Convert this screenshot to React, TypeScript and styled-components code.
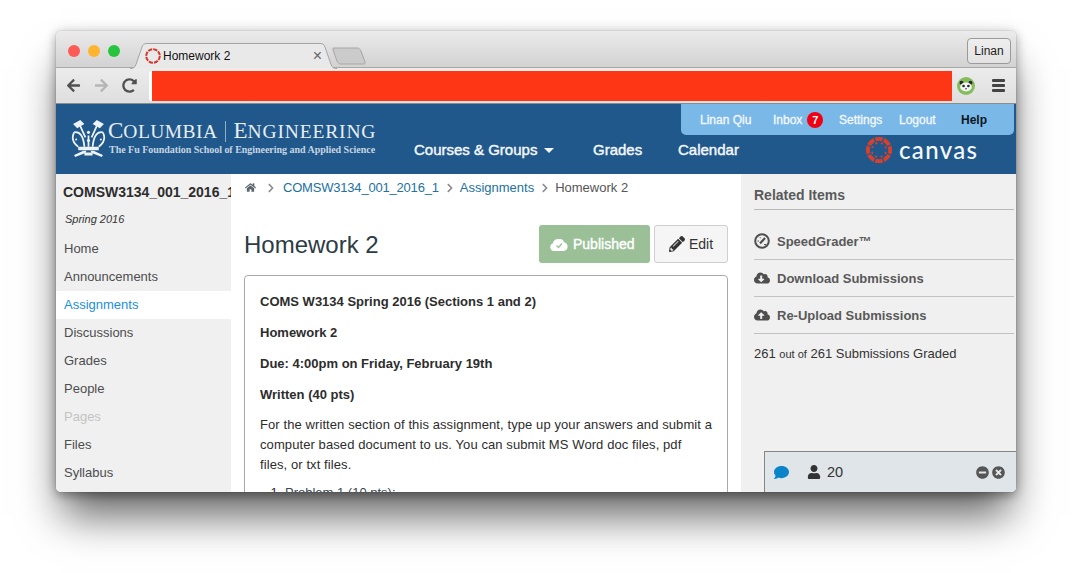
import React from "react";
import styled, { createGlobalStyle } from "styled-components";
import { FaHome, FaPencilAlt, FaComment, FaUser, FaMinusCircle, FaTimesCircle, FaCloudDownloadAlt, FaCloudUploadAlt, FaArrowLeft, FaArrowRight, FaRedoAlt, FaChevronRight } from "react-icons/fa";

const Global = createGlobalStyle`
  html, body { margin: 0; padding: 0; background: #fff; }
  body { font-family: "Liberation Sans", Arial, sans-serif; width: 1072px; height: 573px; overflow: hidden; }
  * { box-sizing: border-box; }
`;
const Stage = styled.div`
  padding: 31px 0 0 56px;
`;
const Window = styled.div`
  position: relative;
  width: 960px;
  height: 461px;
  border-radius: 5px;
  overflow: hidden;
  background: #fff;
`;
const Shadow = styled.div`
  width: 960px;
  height: 461px;
  border-radius: 5px;
  box-shadow: 0 30px 40px -6px rgba(0, 0, 0, 0.6), 0 4px 10px rgba(0, 0, 0, 0.25), 0 0 14px rgba(0, 0, 0, 0.15), 0 0 1px rgba(0, 0, 0, 0.5);
`;
const TitleBar = styled.div`
  height: 37px;
  display: flex;
  align-items: flex-start;
  padding: 0 5px 0 12px;
  background: linear-gradient(#ebebeb, #d2d2d2);
  border-bottom: 1px solid #a8a8a8;
`;
const Lights = styled.div`
  display: flex;
  gap: 8px;
  padding-top: 14px;
`;
const Light = styled.span<{ $c: string }>`
  width: 12px;
  height: 12px;
  border-radius: 50%;
  background: ${(p) => p.$c};
`;
const Tab = styled.div`
  position: relative;
  width: 207px;
  height: 25px;
  margin: 12px 0 0 10px;
  display: flex;
  align-items: center;
  padding: 0 15px 0 15px;
  font-size: 12px;
  color: #111;
  z-index: 1;
`;
const TabShape = styled.svg`
  position: absolute;
  left: 0;
  top: 0;
  width: 207px;
  height: 26px;
`;
const Favicon = styled.svg`
  position: relative;
  width: 16px;
  height: 16px;
  margin-right: 2px;
`;
const TabLabel = styled.span`
  position: relative;
  flex: 1;
`;
const TabClose = styled.span`
  position: relative;
  font-size: 16px;
  color: #666;
  line-height: 1;
`;
const NewTab = styled.svg`
  width: 34px;
  height: 18px;
  margin: 16px 0 0 -5px;
`;
const Spacer = styled.div`
  flex: 1;
`;
const ProfileButton = styled.div`
  width: 44px;
  height: 26px;
  margin-top: 7px;
  border: 1px solid #9a9a9a;
  border-radius: 4px;
  background: linear-gradient(#eee, #e2e2e2);
  font-size: 12px;
  color: #222;
  display: flex;
  align-items: center;
  justify-content: center;
`;
const Toolbar = styled.div`
  height: 36px;
  display: flex;
  align-items: center;
  padding: 0 11px 0 10px;
  background: linear-gradient(#ececec, #dedede);
  border-bottom: 1px solid #8c8c8c;
`;
const NavIcon = styled.span<{ $c: string }>`
  display: flex;
  align-items: center;
  justify-content: center;
  width: 15px;
  margin-right: 13px;
  color: ${(p) => p.$c};
  font-size: 15px;
`;
const Omnibox = styled.div`
  width: 804px;
  height: 30px;
  margin-left: -1px;
  padding-left: 3px;
  background: #fff;
  border-radius: 3px 0 0 3px;
`;
const Redacted = styled.div`
  height: 30px;
  background: #ff3616;
`;
const Panda = styled.svg`
  width: 18px;
  height: 18px;
  margin: 0 1px 0 5px;
`;
const Menu = styled.div`
  width: 13px;
  margin-left: 16px;
  display: flex;
  flex-direction: column;
  gap: 2px;
`;
const MenuBar = styled.span`
  height: 3px;
  border-radius: 1px;
  background: #444;
`;
const Header = styled.header`
  position: relative;
  height: 70px;
  background: #20588b;
  display: flex;
  align-items: flex-start;
  padding-left: 15px;
`;
const Brand = styled.div`
  display: flex;
  gap: 2px;
  padding-top: 16px;
  width: 343px;
  flex: none;
`;
const BrandText = styled.div`
  font-family: "Liberation Serif", serif;
  color: #e8eef4;
  white-space: nowrap;
  margin-top: -1px;
`;
const BrandTop = styled.div`
  display: flex;
  align-items: baseline;
  line-height: 24px;
  height: 24px;
`;
const BrandWord = styled.span<{ $ls: number }>`
  font-size: 19.5px;
  letter-spacing: ${(p) => p.$ls}px;
`;
const BrandCap = styled.span`
  font-size: 23px;
`;
const BrandDivider = styled.span`
  width: 1px;
  height: 21px;
  margin: 0 8px 0 7px;
  align-self: center;
  background: #8fb0cc;
`;
const BrandSub = styled.div`
  font-size: 10px;
  font-weight: bold;
  line-height: 11px;
  color: #c7d5e2;
  margin: 1px 0 0 1px;
  letter-spacing: -0.03px;
`;
const MainNav = styled.nav`
  display: flex;
  padding-top: 37px;
  font-size: 15px;
  -webkit-text-stroke: 0.45px #f4f7fa;
  color: #f4f7fa;
  line-height: 18px;
  white-space: nowrap;
`;
const NavItem = styled.span<{ $w: number }>`
  width: ${(p) => p.$w}px;
  display: flex;
  align-items: center;
`;
const Caret = styled.span`
  width: 0;
  height: 0;
  margin-left: 7px;
  border-left: 5px solid transparent;
  border-right: 5px solid transparent;
  border-top: 5px solid #f4f7fa;
`;
const CanvasLogo = styled.div`
  margin-left: 14px;
  padding-top: 32px;
  display: flex;
  align-items: center;
  gap: 7px;
  font-family: "Lato", sans-serif;
  font-size: 24px;
  font-weight: 500;
  line-height: 28px;
  letter-spacing: 1.35px;
  color: #f5f8fb;
`;
const AccountNav = styled.div`
  position: absolute;
  left: 625px;
  top: 0;
  width: 333px;
  height: 31px;
  padding-left: 19px;
  background: #7ab8e8;
  border-radius: 0 0 5px 5px;
  display: flex;
  align-items: center;
  font-size: 12px;
  color: #f1f7fc;
`;
const AccountItem = styled.span<{ $w: number; $dark?: boolean }>`
  width: ${(p) => p.$w}px;
  display: flex;
  align-items: center;
  color: ${(p) => (p.$dark ? "#0c1520" : "inherit")};
  font-weight: ${(p) => (p.$dark ? "bold" : "normal")};
  -webkit-text-stroke: ${(p) => (p.$dark ? "0" : "0.35px #f1f7fc")};
`;
const Badge = styled.span`
  width: 16px;
  height: 16px;
  margin-left: 5px;
  border-radius: 50%;
  background: #f00012;
  color: #fff;
  font-size: 11px;
  font-weight: bold;
  -webkit-text-stroke: 0;
  display: flex;
  align-items: center;
  justify-content: center;
`;
const Columns = styled.div`
  display: flex;
  height: 318px;
  overflow: hidden;
`;
const Sidebar = styled.aside`
  width: 175px;
  flex: none;
  background: #f0f0f0;
  overflow: hidden;
`;
const CourseTitle = styled.div`
  padding: 10px 0 0 7px;
  font-size: 14px;
  font-weight: bold;
  line-height: 17px;
  color: #2d2d2d;
  white-space: nowrap;
`;
const Term = styled.div`
  padding: 12px 0 0 9px;
  font-size: 11px;
  font-style: italic;
  line-height: 13px;
  color: #333;
`;
const SideNav = styled.nav`
  padding-top: 9px;
`;
const SideItem = styled.div<{ $active?: boolean; $off?: boolean }>`
  height: 28px;
  padding: 0 0 2px 8px;
  display: flex;
  align-items: center;
  font-size: 13px;
  color: ${(p) => (p.$active ? "#1b8fdc" : p.$off ? "#c4c4c4" : "#4d4d4d")};
  background: ${(p) => (p.$active ? "#fff" : "transparent")};
`;
const Main = styled.main`
  width: 510px;
  flex: none;
  padding: 0 13px;
  overflow: hidden;
`;
const Crumbs = styled.div`
  height: 27px;
  display: flex;
  align-items: center;
  font-size: 13px;
  color: #555;
`;
const CrumbLink = styled.span<{ $tight?: boolean }>`
  color: #23719f;
  letter-spacing: ${(p) => (p.$tight ? "-0.2px" : "0")};
`;
const CrumbSep = styled.span<{ $first?: boolean }>`
  display: flex;
  color: #8c8c8c;
  font-size: 10px;
  margin: ${(p) => (p.$first ? "0 7px 0 10px" : "0 5px 0 6px")};
`;
const HomeIcon = styled.span`
  display: flex;
  font-size: 11px;
  color: #5c6670;
  margin-left: 1px;
`;
const TitleRow = styled.div`
  display: flex;
  align-items: center;
  height: 38px;
  margin-top: 24px;
`;
const PageTitle = styled.h1`
  flex: 1;
  margin: 0;
  padding-top: 2px;
  font-size: 24px;
  font-weight: normal;
  color: #2d3b45;
`;
const Published = styled.div`
  width: 111px;
  height: 38px;
  padding-left: 11px;
  background: #9bc098;
  border-radius: 3px;
  display: flex;
  align-items: center;
  gap: 5px;
  color: #fff;
  font-size: 14px;
  -webkit-text-stroke: 0.4px #fff;
`;
const EditButton = styled.div`
  width: 74px;
  height: 38px;
  margin-left: 4px;
  background: #f5f5f5;
  border: 1px solid #cfcfcf;
  border-radius: 3px;
  display: flex;
  align-items: center;
  justify-content: center;
  gap: 4px;
  color: #333;
  font-size: 14px;
  & > svg { font-size: 16px; }
`;
const Description = styled.article`
  margin-top: 12px;
  height: 240px;
  padding: 16px 15px 0;
  border: 1px solid #a9a9a9;
  border-radius: 4px 4px 0 0;
  font-size: 13px;
  line-height: 20px;
  color: #2d2d2d;
`;
const Para = styled.p<{ $tight?: boolean }>`
  margin: 0 0 ${(p) => (p.$tight ? 10 : 11)}px;
`;
const BodyPara = styled.p`
  margin: 0;
  letter-spacing: 0.09px;
  white-space: nowrap;
`;
const List = styled.ol`
  margin: 8px 0 0;
  padding-left: 25px;
`;
const ListLink = styled.span`
  color: #3a4a55;
`;
const Related = styled.aside`
  width: 275px;
  flex: none;
  padding: 0 2px 0 13px;
  background: #f0f0f0;
`;
const RelatedHead = styled.div`
  height: 36px;
  padding-top: 13px;
  border-bottom: 1px solid #b9b9b9;
  font-size: 14px;
  font-weight: bold;
  line-height: 17px;
  color: #5a5a5a;
`;
const RelatedRow = styled.div<{ $first?: boolean }>`
  height: ${(p) => (p.$first ? 50 : 37)}px;
  padding-top: ${(p) => (p.$first ? 13 : 0)}px;
  border-bottom: 1px solid #c2c2c2;
  display: flex;
  align-items: center;
  gap: 7px;
  font-size: 13px;
  font-weight: bold;
  color: #595959;
`;
const RowIcon = styled.span`
  width: 16px;
  display: flex;
  justify-content: center;
  font-size: 16px;
  color: #4f4f4f;
`;
const Graded = styled.div`
  padding-top: 12px;
  font-size: 13px;
  line-height: 16px;
  color: #333;
`;
const Small = styled.small`
  font-size: 11px;
`;
const ChatBar = styled.div`
  position: absolute;
  right: 0;
  bottom: 0;
  width: 252px;
  height: 41px;
  padding: 0 11px 0 9px;
  background: #dfe5e8;
  border-top: 1px solid #858585;
  border-left: 1px solid #858585;
  display: flex;
  align-items: center;
  color: #333;
  font-size: 14.5px;
`;
const ChatIcon = styled.span`
  display: flex;
  width: 33px;
  font-size: 15px;
  color: #0a84c9;
`;
const PeopleIcon = styled.span`
  display: flex;
  margin-right: 6px;
  font-size: 14px;
  color: #333;
`;
const ChatTools = styled.span`
  margin-left: auto;
  display: flex;
  gap: 3px;
  font-size: 13px;
  color: #555;
`;

const Crown = () => (
  <svg width="35" height="37" viewBox="0 0 34 36">
    <g fill="#eef3f7">
      <path d="M2 4l7-4 4 4-7 4zM32 4l-7-4-4 4 7 4z" />
      <path d="M7 26h20v3.500H7z" />
      <path d="M4 36l-1-2 9-4h3l-1 2zM30 36l1-2-9-4h-3l1 2z" />
      <path d="M13 31.500h8v3h-8z" />
      <circle cx="17" cy="12" r="1.500" />
      <circle cx="5" cy="19" r="1" />
      <circle cx="29" cy="19" r="1" />
      <circle cx="17" cy="20" r="1.500" />
    </g>
    <g fill="none" stroke="#eef3f7" strokeWidth="1.700">
      <path d="M9 6l5 11M25 6l-5 11" />
      <path d="M3 12C0 18 3 23 7 26M31 12c3 6 0 11-4 14" />
      <path d="M3 12c6-1 9 4 10 14M31 12c-6-1-9 4-10 14" />
      <path d="M17 15v11" />
    </g>
  </svg>
);

const CanvasMark = () => (
  <svg width="26" height="26" viewBox="-13 -13 26 26" fill="#d8402a">
    {[0, 45, 90, 135, 180, 225, 270, 315].map((a) => (
      <g key={a} transform={`rotate(${a})`}>
        <path d="M-4.400 -12.400Q0 -13.600 4.400 -12.400L3 -8.800Q0 -9.500 -3 -8.800Z" />
        <circle cx="2.900" cy="-6.600" r="1.100" />
      </g>
    ))}
  </svg>
);

const CloudCheck = () => (
  <svg width="18" height="14" viewBox="0 0 18 14">
    <path fill="#fff" d="M4 14a4 4 0 0 1-1-7.800A5 5 0 0 1 9 2a4.500 4.500 0 0 1 5 3.200A4.500 4.500 0 0 1 14 14z" />
    <path fill="none" stroke="#9bc098" strokeWidth="1.200" d="M6.500 8.500l2 2 3.500-4" />
  </svg>
);

const Gauge = () => (
  <svg width="16" height="16" viewBox="0 0 16 16" fill="none" stroke="#4f4f4f">
    <circle cx="8" cy="8" r="6.800" strokeWidth="2" />
    <path d="M6 10.500L11 5" strokeWidth="2.200" />
    <path d="M3.500 8h1.500M6 4.200l.5 1M10 11.500h2" strokeWidth="1" />
  </svg>
);

const PandaIcon = () => (
  <Panda viewBox="0 0 20 20">
    <circle cx="10" cy="10" r="10" fill="#86bd5c" />
    <circle cx="5" cy="6.500" r="2.200" fill="#2a2a2a" />
    <circle cx="15" cy="6.500" r="2.200" fill="#2a2a2a" />
    <ellipse cx="10" cy="11" rx="6.500" ry="5" fill="#f5f5f5" />
    <circle cx="7.300" cy="10" r="1.500" fill="#2a2a2a" />
    <circle cx="12.700" cy="10" r="1.500" fill="#2a2a2a" />
    <circle cx="10" cy="13" r="0.900" fill="#2a2a2a" />
  </Panda>
);

const nav = ["Home", "Announcements", "Assignments", "Discussions", "Grades", "People", "Pages", "Files", "Syllabus"];

export default function App() {
  return (
    <Stage>
      <Global />
      <Shadow>
        <Window>
          <TitleBar>
            <Lights>
              <Light $c="#fc5b57" />
              <Light $c="#fdb52f" />
              <Light $c="#27c53f" />
            </Lights>
            <Tab>
              <TabShape viewBox="0 0 207 26">
                <path d="M0 25.500c3 0 5-1 6-4L12 4c1-2.500 2-3.500 5-3.500h173c3 0 4 1 5 3.500l6 17.500c1 3 3 4 6 4" fill="#e9e9e9" stroke="#a4a4a4" />
              </TabShape>
              <Favicon viewBox="0 0 16 16">
                <circle cx="8" cy="8" r="6.800" fill="none" stroke="#d8352a" strokeWidth="2" strokeDasharray="4.300 1.040" />
              </Favicon>
              <TabLabel>Homework 2</TabLabel>
              <TabClose>×</TabClose>
            </Tab>
            <NewTab viewBox="0 0 34 18">
              <path d="M1 1h24c2 0 3 1 4 3l4 11c.5 1.500 0 2-2 2H9c-2 0-3-1-4-3L1 3z" fill="#cbcbcb" stroke="#a6a6a6" />
            </NewTab>
            <Spacer />
            <ProfileButton>Linan</ProfileButton>
          </TitleBar>
          <Toolbar>
            <NavIcon $c="#505050"><FaArrowLeft /></NavIcon>
            <NavIcon $c="#b5b5b5"><FaArrowRight /></NavIcon>
            <NavIcon $c="#505050"><FaRedoAlt /></NavIcon>
            <Omnibox><Redacted /></Omnibox>
            <PandaIcon />
            <Menu><MenuBar /><MenuBar /><MenuBar /></Menu>
          </Toolbar>
          <Header>
            <Brand>
              <Crown />
              <BrandText>
                <BrandTop>
                  <BrandCap>C</BrandCap><BrandWord $ls={0.45}>OLUMBIA</BrandWord>
                  <BrandDivider />
                  <BrandCap>E</BrandCap><BrandWord $ls={0.85}>NGINEERING</BrandWord>
                </BrandTop>
                <BrandSub>The Fu Foundation School of Engineering and Applied Science</BrandSub>
              </BrandText>
            </Brand>
            <MainNav>
              <NavItem $w={179}>Courses &amp; Groups<Caret /></NavItem>
              <NavItem $w={85}>Grades</NavItem>
              <NavItem $w={174}>Calendar</NavItem>
            </MainNav>
            <CanvasLogo><CanvasMark />canvas</CanvasLogo>
            <AccountNav>
              <AccountItem $w={73}>Linan Qiu</AccountItem>
              <AccountItem $w={66}>Inbox<Badge>7</Badge></AccountItem>
              <AccountItem $w={60}>Settings</AccountItem>
              <AccountItem $w={62}>Logout</AccountItem>
              <AccountItem $w={40} $dark>Help</AccountItem>
            </AccountNav>
          </Header>
          <Columns>
            <Sidebar>
              <CourseTitle>COMSW3134_001_2016_1</CourseTitle>
              <Term>Spring 2016</Term>
              <SideNav>
                {nav.map((n) => (
                  <SideItem key={n} $active={n === "Assignments"} $off={n === "Pages"}>{n}</SideItem>
                ))}
              </SideNav>
            </Sidebar>
            <Main>
              <Crumbs>
                <HomeIcon><FaHome /></HomeIcon>
                <CrumbSep $first><FaChevronRight /></CrumbSep>
                <CrumbLink $tight>COMSW3134_001_2016_1</CrumbLink>
                <CrumbSep><FaChevronRight /></CrumbSep>
                <CrumbLink>Assignments</CrumbLink>
                <CrumbSep><FaChevronRight /></CrumbSep>
                Homework 2
              </Crumbs>
              <TitleRow>
                <PageTitle>Homework 2</PageTitle>
                <Published><CloudCheck />Published</Published>
                <EditButton><FaPencilAlt />Edit</EditButton>
              </TitleRow>
              <Description>
                <Para><strong>COMS W3134 Spring 2016 (Sections 1 and 2)</strong></Para>
                <Para><strong>Homework 2</strong></Para>
                <Para><strong>Due: 4:00pm on Friday, February 19th</strong></Para>
                <Para $tight><strong>Written (40 pts)</strong></Para>
                <BodyPara>
                  For the written section of this assignment, type up your answers and submit a<br />
                  computer based document to us. You can submit MS Word doc files, pdf<br />
                  files, or txt files.
                </BodyPara>
                <List><li><ListLink>Problem 1 (10 pts):</ListLink></li></List>
              </Description>
            </Main>
            <Related>
              <RelatedHead>Related Items</RelatedHead>
              <RelatedRow $first><RowIcon><Gauge /></RowIcon>SpeedGrader™</RelatedRow>
              <RelatedRow><RowIcon><FaCloudDownloadAlt /></RowIcon>Download Submissions</RelatedRow>
              <RelatedRow><RowIcon><FaCloudUploadAlt /></RowIcon>Re-Upload Submissions</RelatedRow>
              <Graded>261 <Small>out of</Small> 261 Submissions Graded</Graded>
            </Related>
          </Columns>
          <ChatBar>
            <ChatIcon><FaComment /></ChatIcon>
            <PeopleIcon><FaUser /></PeopleIcon>
            20
            <ChatTools><FaMinusCircle /><FaTimesCircle /></ChatTools>
          </ChatBar>
        </Window>
      </Shadow>
    </Stage>
  );
}
